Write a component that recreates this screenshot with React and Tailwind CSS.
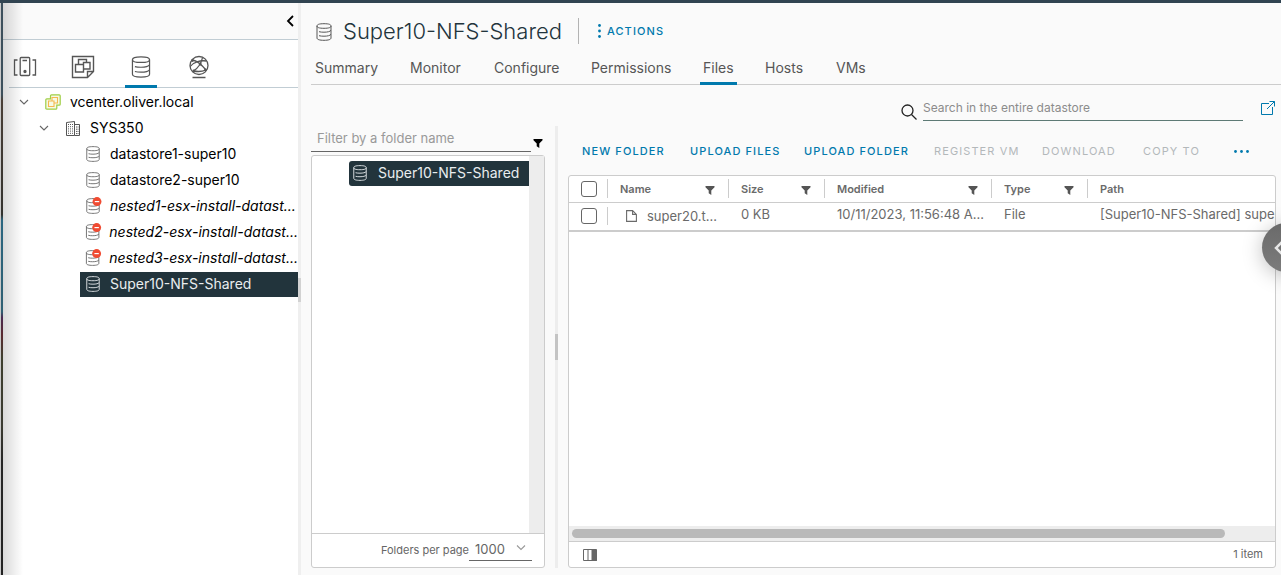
import React from "react";

function DatastoreIcon({ className = "h-4 w-4", blocked = false }) {
  return (
    <svg viewBox="0 0 16 18" className={className} fill="none" stroke="currentColor" aria-hidden="true">
      <path d="M1 3C1 1.500 3 .7 8 .7s7 .8 7 2.300-2 2.300-7 2.300S1 4.500 1 3z" />
      <path d="M1 3v12c0 1.500 2.500 2.300 7 2.300s7-.8 7-2.300V3" />
      <path d="M3 8.700c1.500.4 3.200.5 5 .5 3.500 0 6-.6 7-1.900M3 12.700c1.500.4 3.200.5 5 .5 3.500 0 6-.6 7-1.900" />
      {blocked && (
        <g stroke="none">
          <circle cx="12.500" cy="4" r="5" fill="#f04b32" />
          <path d="M10 3.400h5v1.300h-5z" fill="#fff" />
        </g>
      )}
    </svg>
  );
}

function HostsIcon() {
  return (
    <svg viewBox="0 0 24 22" className="h-[22px] w-6" fill="none" stroke="currentColor" strokeWidth="1.300" aria-hidden="true">
      <rect x="7.200" y="1.500" width="9.500" height="18" rx="1" />
      <path d="M4.500 4h-3v15h3M19.500 4h3v15h-3M9.500 4.500H14" />
      <circle cx="12" cy="15.500" r="1" fill="currentColor" />
    </svg>
  );
}

function VmsIcon() {
  return (
    <svg viewBox="0 0 24 24" className="h-6 w-6" fill="none" stroke="currentColor" strokeWidth="1.400" aria-hidden="true">
      <path d="M16.500 22.500h-15v-21h21v15zM16.500 22.500v-6h6" />
      <path d="M7.500 9V4.500h8v3M12.500 9V7.500h6.500V14h-6.500M4.500 9.500h8V17h-8z" />
    </svg>
  );
}

function NetworkIcon() {
  return (
    <svg viewBox="0 0 24 24" className="h-6 w-6" fill="none" stroke="currentColor" strokeWidth="1.300" aria-hidden="true">
      <circle cx="12" cy="10.500" r="9" />
      <path d="M5.500 5C9 5.500 14 9 19 15M15.500 2.500C14.500 8 11 13 6.500 16M3.200 11.500C6 7.500 13 5 19.500 6M6.500 16c4 .8 9 .5 12.500-1" />
      <path d="M5.500 22.500h13" strokeWidth="1.500" />
      <g fill="currentColor" stroke="none">
        <circle cx="5.500" cy="5.500" r="1.400" />
        <circle cx="13.200" cy="9" r="1.500" />
        <circle cx="6.800" cy="16" r="1.400" />
        <circle cx="18.500" cy="14.800" r="1.400" />
      </g>
    </svg>
  );
}

function VcenterIcon() {
  return (
    <svg viewBox="0 0 16 16" className="h-4 w-4" fill="none" aria-hidden="true">
      <path d="M6.500.8h7.700c.6 0 1 .4 1 1v8.400c0 .6-.4 1-1 1h-2.400v3c0 .6-.4 1-1 1h-9c-.6 0-1-.4-1-1V5.800c0-.6.4-1 1-1h3.700v-3c0-.6.4-1 1-1z" fill="#f6fae6" stroke="#9fce45" strokeWidth="1.200" />
      <path d="M7 7V3.500h5.500V9H9M3.500 7H9v5.500H3.500z" stroke="#f5b84e" strokeWidth="1.100" />
    </svg>
  );
}

function DatacenterIcon() {
  return (
    <svg viewBox="0 0 14 15" className="h-[15px] w-[14px] text-[#555]" fill="none" stroke="currentColor" aria-hidden="true">
      <path d="M.5 14.500V1.500l8-1v14zM8.500 3.500h5v11h-5" />
      <path d="M2.500 3v10M4.500 3v10M6.500 3v10M10.500 5.500v8M12 5.500v8" strokeDasharray="1 1.200" />
    </svg>
  );
}

function Chevron({ className = "h-2 w-[10px]" }) {
  return (
    <svg viewBox="0 0 10 7" className={className} fill="none" stroke="currentColor" strokeWidth="1.100" aria-hidden="true">
      <path d="m1 1.500 4 4 4-4" />
    </svg>
  );
}

function FunnelIcon({ className = "text-[#555]" }) {
  return (
    <svg viewBox="0 0 10 9" className={`h-[9px] w-[10px] ${className}`} fill="currentColor" aria-hidden="true">
      <path d="M.5 0h9v1.200L6.300 4.500V9L3.700 7.300V4.500L.5 1.200z" />
    </svg>
  );
}

const navTabs = [
  { label: "Hosts and clusters", icon: <HostsIcon /> },
  { label: "VMs and templates", icon: <VmsIcon /> },
  { label: "Storage", icon: <DatastoreIcon className="h-[22px] w-5" />, active: true },
  { label: "Networking", icon: <NetworkIcon /> },
];

const datastores = [
  { name: "datastore1-super10" },
  { name: "datastore2-super10" },
  { name: "nested1-esx-install-datast...", blocked: true },
  { name: "nested2-esx-install-datast...", blocked: true },
  { name: "nested3-esx-install-datast...", blocked: true },
  { name: "Super10-NFS-Shared", selected: true },
];

function Sidebar() {
  return (
    <aside className="relative flex w-[295px] shrink-0 flex-col bg-white">
      <div className="flex h-[37px] items-center justify-end border-b border-[#c1cdd4] bg-[#fafafa] pr-1">
        <button aria-label="Collapse navigation" className="text-black">
          <svg viewBox="0 0 8 12" className="h-3 w-2" fill="none" stroke="currentColor" strokeWidth="1.800">
            <path d="M7 1 2 6l5 5" />
          </svg>
        </button>
      </div>
      <nav className="ml-[6px] flex h-12 border-b border-[#c1cdd4] text-[#565656]">
        {navTabs.map((t) => (
          <button
            key={t.label}
            aria-label={t.label}
            className={`-mb-px mr-[26px] flex w-8 items-center justify-center border-b-3 pt-2 ${t.active ? "border-[#0079ad]" : "border-transparent"}`}
          >
            {t.icon}
          </button>
        ))}
      </nav>
      <ul className="pt-px text-sm text-black">
        <li className="flex h-[26px] items-center pl-4">
          <button aria-label="Toggle vcenter.oliver.local" className="mr-4 text-[#666]"><Chevron /></button>
          <VcenterIcon />
          <span className="ml-[9px]">vcenter.oliver.local</span>
        </li>
        <li className="flex h-[26px] items-center pl-9">
          <button aria-label="Toggle SYS350" className="mr-[17px] text-[#666]"><Chevron /></button>
          <DatacenterIcon />
          <span className="ml-[10px]">SYS350</span>
        </li>
        {datastores.map((d) => (
          <li key={d.name} className="flex h-[26px] items-center pl-[77px]">
            <a
              href="#datastore"
              className={`flex h-[25px] w-full items-center gap-[9px] whitespace-nowrap pl-[5px] ${d.selected ? "bg-[#22343c] text-[#e9edef]" : ""} ${d.blocked ? "italic" : ""}`}
            >
              <DatastoreIcon className={`h-4 w-4 overflow-visible ${d.selected ? "" : "text-[#666]"}`} blocked={d.blocked} />
              <span>{d.name}</span>
            </a>
          </li>
        ))}
      </ul>
      <div className="pointer-events-none absolute inset-y-0 left-0 w-5 bg-linear-to-r from-black/15 to-transparent" />
    </aside>
  );
}

const pageTabs = [
  { label: "Summary", width: "w-[95px]" },
  { label: "Monitor", width: "w-[84px]" },
  { label: "Configure", width: "w-[97px]" },
  { label: "Permissions", width: "w-28" },
  { label: "Files", width: "w-[62px]", active: true },
  { label: "Hosts", width: "w-[71px]" },
  { label: "VMs", width: "w-9" },
];

function PageHeader() {
  return (
    <header className="ml-[10px]">
      <div className="flex h-[52px] items-center pl-[5px] pt-1">
        <DatastoreIcon className="mt-px h-[18px] w-4 text-[#565656]" />
        <h1 className="ml-[11px] text-[22px] font-light text-[#22343c]">Super10-NFS-Shared</h1>
        <span className="ml-4 h-[26px] w-px bg-[#b3b3b3]" />
        <button className="ml-[19px] flex items-center gap-[6px] text-[11px] font-medium tracking-widest text-[#0079ad]">
          <svg viewBox="0 0 3 14" className="h-[14px] w-[3px]" fill="currentColor" aria-hidden="true">
            <circle cx="1.500" cy="1.500" r="1.400" />
            <circle cx="1.500" cy="7" r="1.400" />
            <circle cx="1.500" cy="12.500" r="1.400" />
          </svg>
          ACTIONS
        </button>
      </div>
      <nav className="flex h-[30px] border-b border-[#ccc] pl-px text-sm text-[#565656]">
        {pageTabs.map((t) => (
          <a key={t.label} href="#tab" className={`-mb-px flex ${t.width}`}>
            <span className={`border-b-3 px-[3px] pt-[3px] ${t.active ? "border-[#0079ad]" : "border-transparent"}`}>{t.label}</span>
          </a>
        ))}
      </nav>
    </header>
  );
}

function SearchBar() {
  return (
    <div className="flex h-9 items-end justify-end pr-[6px]">
      <svg viewBox="0 0 16 16" className="mb-px mr-[6px] h-4 w-4 text-[#222]" fill="none" stroke="currentColor" strokeWidth="1.300" aria-hidden="true">
        <circle cx="6.500" cy="6.500" r="5.500" />
        <path d="m10.500 10.500 5 5" />
      </svg>
      <input
        aria-label="Search in the entire datastore"
        placeholder="Search in the entire datastore"
        className="h-[26px] w-80 border-b border-[#5d7a75] bg-transparent pb-px text-xs outline-none placeholder:text-[#8c8c8c]"
      />
      <button aria-label="Open in new window" className="mb-[6px] ml-[18px] text-[#0079ad]">
        <svg viewBox="0 0 14 14" className="h-[14px] w-[14px]" fill="none" stroke="currentColor">
          <path d="M8 2.500H.5v11h11V6M8.500.5h5v5M13.500.5 6 8" />
        </svg>
      </button>
    </div>
  );
}

function FolderPanel() {
  return (
    <section className="flex w-[234px] shrink-0 flex-col">
      <div className="flex h-[31px] items-end">
        <input
          aria-label="Filter by a folder name"
          placeholder="Filter by a folder name"
          className="h-[26px] w-[220px] border-b border-[#666] bg-transparent pb-[2px] pl-[6px] text-[13px] outline-none placeholder:text-[#999]"
        />
        <FunnelIcon className="mb-1 ml-[2px] shrink-0 text-black" />
      </div>
      <div className="mt-[3px] flex flex-1 flex-col rounded-[3px] border border-[#ccc] bg-white">
        <div className="flex flex-1">
          <div className="flex-1 pl-[37px] pt-[5px]">
            <a href="#folder" className="flex h-[25px] items-center gap-[10px] whitespace-nowrap rounded-l-[3px] bg-[#22343c] pb-[2px] pl-[3px] text-sm text-[#e9edef]">
              <DatastoreIcon className="h-4 w-4" />
              Super10-NFS-Shared
            </a>
          </div>
          <div className="w-[15px] bg-[#ededed]" />
        </div>
        <div className="flex h-[34px] items-center justify-end border-t border-[#ccc] pr-3 text-[#666]">
          <label htmlFor="page-size" className="text-[11px]">Folders per page</label>
          <span className="flex items-center border-b border-[#666]">
            <select id="page-size" className="w-[69px] appearance-none bg-transparent pl-[6px] text-[13px]" defaultValue="1000">
              <option>1000</option>
            </select>
            <span className="-ml-[22px] mb-[6px] mr-[6px] text-[#999]"><Chevron className="h-[7px] w-[10px]" /></span>
          </span>
        </div>
      </div>
    </section>
  );
}

const actions = [
  { label: "NEW FOLDER", width: "w-[108px]" },
  { label: "UPLOAD FILES", width: "w-[114px]" },
  { label: "UPLOAD FOLDER", width: "w-[130px]" },
  { label: "REGISTER VM", width: "w-[108px]", disabled: true },
  { label: "DOWNLOAD", width: "w-[101px]", disabled: true },
  { label: "COPY TO", width: "w-[91px]", disabled: true },
];

const columns = [
  { label: "Name", width: "w-[121px]", filter: true },
  { label: "Size", width: "w-24", filter: true },
  { label: "Modified", width: "w-[167px]", filter: true },
  { label: "Type", width: "w-24", filter: true },
  { label: "Path", width: "w-auto" },
];

function Tick({ label }) {
  return (
    <input type="checkbox" aria-label={label} className="block h-4 w-4 appearance-none rounded-[3px] border border-[#666] bg-white" />
  );
}

function FilesPanel() {
  return (
    <section className="flex min-w-0 flex-1 flex-col">
      <div className="flex h-[54px] items-center whitespace-nowrap pl-[14px] pt-[6px] text-[11px] font-medium tracking-widest">
        {actions.map((a) => (
          <button key={a.label} disabled={a.disabled} className={`text-left ${a.width} ${a.disabled ? "font-normal text-[#b3b8ba]" : "text-[#0079ad]"}`}>
            {a.label}
          </button>
        ))}
        <button aria-label="More actions" className="text-[#0079ad]">
          <svg viewBox="0 0 15 3" className="h-[3px] w-[15px]" fill="currentColor">
            <circle cx="1.500" cy="1.500" r="1.400" />
            <circle cx="7.500" cy="1.500" r="1.400" />
            <circle cx="13.500" cy="1.500" r="1.400" />
          </svg>
        </button>
      </div>
      <div className="flex flex-1 flex-col overflow-hidden rounded-[3px] border border-[#ccc] bg-white">
        <table className="w-full table-fixed border-collapse whitespace-nowrap text-left text-[#6a6a6a]">
          <thead>
            <tr className="h-[26px] border-b border-[#ccc] text-[11px]">
              <th className="w-[38px] pl-3"><Tick label="Select all" /></th>
              {columns.map((c) => (
                <th key={c.label} className={`${c.width} p-0 font-semibold`}>
                  <div className="flex h-[19px] items-center justify-between border-l border-[#ccc] pl-3 pr-[13px]">
                    {c.label}
                    {c.filter && (
                      <button aria-label={`Filter ${c.label}`} className="pt-[3px]"><FunnelIcon /></button>
                    )}
                  </div>
                </th>
              ))}
            </tr>
          </thead>
          <tbody className="text-[13px]">
            <tr className="h-[29px] border-b-2 border-[#ccc]">
              <td className="pl-3"><Tick label="Select super20" /></td>
              <td className="p-0">
                <div className="flex h-[18px] items-center border-l border-[#ccc] pl-[18px]">
                  <svg viewBox="0 0 11 12" className="mr-[10px] h-3 w-[11px]" fill="none" stroke="currentColor" strokeWidth="1.100" aria-hidden="true">
                    <path d="M.6.600h6l3.800 3.800v7H.6zM6.600.600v3.800h3.800" />
                  </svg>
                  super20.t...
                </div>
              </td>
              <td className="p-0 pb-1 pl-[13px]">0 KB</td>
              <td className="p-0 pb-1 pl-[13px]">10/11/2023, 11:56:48 A...</td>
              <td className="p-0 pb-1 pl-[13px]">File</td>
              <td className="overflow-hidden p-0 pb-1 pl-[13px]">[Super10-NFS-Shared] super20</td>
            </tr>
          </tbody>
        </table>
        <div className="mt-auto h-[15px] bg-[#ededed] pl-[3px] pr-[50px] pt-[3px]">
          <div className="h-[9px] rounded-full bg-[#b9b9b9]" />
        </div>
        <footer className="flex h-[26px] items-center justify-between border-t border-[#ccc] pl-[14px] pr-3 text-[11px] text-[#666]">
          <button aria-label="Manage columns">
            <svg viewBox="0 0 14 12" className="h-3 w-[14px]" fill="none" stroke="currentColor">
              <path d="M.5.500h13v11H.5zM5 .5v11" />
              <path d="M9 1h4.500v10.500H9z" fill="currentColor" />
            </svg>
          </button>
          <span>1 item</span>
        </footer>
      </div>
    </section>
  );
}

export default function App() {
  return (
    <div className="relative flex min-h-screen flex-col overflow-hidden bg-[#fafafa] font-['Inter',sans-serif]">
      <div className="h-[3px] bg-[#314451]" />
      <div className="flex flex-1">
        <div className="w-[3px] shrink-0 border-l border-[#c8c8c8] bg-[linear-gradient(#3d505c_0%,#3d505c_16%,#4a4038_17%,#33322e_37%,#2b6680_38%,#2f5f72_54%,#4a2a50_55%,#5a2a30_58%,#3e3f2e_62%,#3a3a30_74%,#262626_80%,#222_100%)]" />
        <Sidebar />
        <div className="w-[3px] shrink-0 bg-[linear-gradient(#efefef_275px,#d2d2d2_275px,#d2d2d2_299px,#efefef_299px)]" />
        <main className="flex min-w-0 flex-1 flex-col">
          <PageHeader />
          <SearchBar />
          <div className="flex flex-1 pb-[7px] pl-[10px] pr-[5px]">
            <FolderPanel />
            <div className="mx-[10px] mt-[5px] flex w-[3px] shrink-0 items-center bg-[#ededed]">
              <div className="h-[26px] w-full bg-[#c4c4c4]" />
            </div>
            <FilesPanel />
          </div>
        </main>
      </div>
      <button
        aria-label="Open side panel"
        className="absolute -right-[30px] top-[223px] flex h-[49px] w-[49px] items-center rounded-full bg-linear-to-b from-[#6a6a6a] to-[#7c7c7c] pl-3 text-[#e6e6e6] shadow-[0_3px_20px_rgba(0,0,0,0.25)]"
      >
        <svg viewBox="0 0 9 14" className="h-[14px] w-[9px]" fill="none" stroke="currentColor" strokeWidth="2.500">
          <path d="M8 1 2 7l6 6" />
        </svg>
      </button>
    </div>
  );
}
